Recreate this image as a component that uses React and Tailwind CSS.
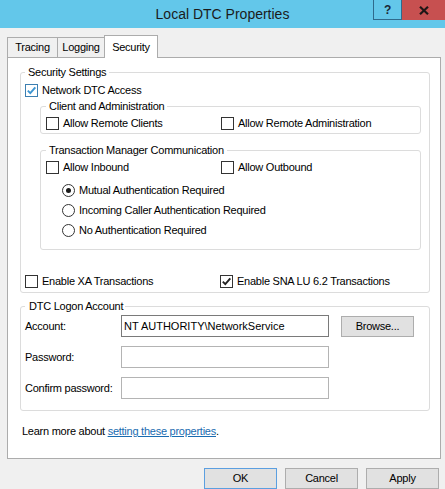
import React from 'react';

const Box = ({ checked, accent }) => (
    <span
        className={`flex w-[13px] h-[13px] shrink-0 items-center justify-center bg-white border ${accent ? 'border-[#3c7fb1]' : 'border-[#333333]'}`}
    >
        {checked && (
            <svg width="11" height="11" viewBox="0 0 11 11">
                <path d="M1.8 5.6 L4.3 8.1 L9.3 2.4" fill="none" stroke={accent ? '#3d95d1' : '#222222'} strokeWidth="1.9" />
            </svg>
        )}
    </span>
);

const Check = ({ label, checked, accent }) => (
    <div className="flex items-center gap-[4px] h-[13px] leading-[13px]">
        <Box checked={checked} accent={accent} />
        <span className="whitespace-nowrap">{label}</span>
    </div>
);

const Radio = ({ label, selected }) => (
    <div className="flex items-center gap-[4px] h-[20px]">
        <span className="flex w-[13px] h-[13px] items-center justify-center rounded-full border border-[#333333] bg-white">
            {selected && <span className="w-[5px] h-[5px] rounded-full bg-[#1a1a1a]"></span>}
        </span>
        <span className="whitespace-nowrap">{label}</span>
    </div>
);

const Input = ({ value, dark }) => (
    <div className={`w-[208px] h-[22px] bg-white border ${dark ? 'border-[#7a7a7a]' : 'border-[#b4b4b4]'} flex items-center pl-[2px] tracking-normal whitespace-nowrap`}>
        {value}
    </div>
);

const Button = ({ children, primary, className = '' }) => (
    <div className={`w-[73px] h-[21px] flex items-center justify-center bg-[#e1e1e1] border ${primary ? 'border-[#5b9fe0]' : 'border-[#adadad]'} ${className}`}>
        {children}
    </div>
);

export default function App() {
    return (
        <div className="w-[445px] h-[489px] bg-[#f0f0f0] overflow-hidden font-['Liberation_Sans',Arial,sans-serif] text-[11px] tracking-[-0.25px] text-black">
            {/* title bar */}
            <div className="relative h-[28px] bg-[#63c7ea] flex items-center justify-center">
                <span className="text-[14px] tracking-normal text-[#1b1b1b]">Local DTC Properties</span>
                <div className="absolute top-0 right-0 flex h-[20px]">
                    <div className="w-[29px] h-[20px] border border-t-0 border-[#2f6a8c] flex items-center justify-center font-bold text-[12px] text-[#1a2735]">?</div>
                    <div className="w-[43px] h-[20px] bg-[#c75050] flex items-center justify-center">
                        <svg width="10" height="9" viewBox="0 0 10 9">
                            <path d="M1 0.8 L9 8.2 M9 0.8 L1 8.2" stroke="#1f1616" strokeWidth="2.2" />
                        </svg>
                    </div>
                </div>
            </div>

            {/* tabs */}
            <div className="mt-[7px] pl-[7px] flex items-end h-[22px]">
                <div className="w-[51px] h-[20px] border border-b-0 border-[#acacac] flex items-center justify-center">Tracing</div>
                <div className="w-[47px] h-[20px] border border-l-0 border-b-0 border-[#acacac] flex items-center justify-center">Logging</div>
                <div className="relative z-10 -ml-px -mb-px w-[54px] h-[23px] border border-b-0 border-[#acacac] bg-white flex items-center justify-center">Security</div>
            </div>

            {/* panel */}
            <div className="ml-[7px] w-[434px] h-[402px] border border-[#acacac] bg-white">
                <fieldset className="ml-[12px] mt-[7px] w-[410px] border border-[#dcdcdc] rounded-[3px] pl-[4px] pb-[4px]">
                    <legend className="px-[3px] leading-[14px]">Security Settings</legend>
                    <div className="mt-[5px]">
                        <Check label="Network DTC Access" checked accent />
                    </div>

                    <fieldset className="ml-[15px] mt-[2px] w-[381px] border border-[#dcdcdc] rounded-[3px] pl-[5px] pb-[3px]">
                        <legend className="px-[3px] leading-[14px]">Client and Administration</legend>
                        <div className="mt-[4px] flex">
                            <div className="w-[175px]"><Check label="Allow Remote Clients" /></div>
                            <Check label="Allow Remote Administration" />
                        </div>
                    </fieldset>

                    <fieldset className="ml-[15px] mt-[9px] w-[381px] border border-[#dcdcdc] rounded-[3px] pl-[5px] pb-[9px]">
                        <legend className="px-[3px] leading-[14px]">Transaction Manager Communication</legend>
                        <div className="mt-[4px] flex">
                            <div className="w-[175px]"><Check label="Allow Inbound" /></div>
                            <Check label="Allow Outbound" />
                        </div>
                        <div className="mt-[6px] ml-[16px]">
                            <Radio label="Mutual Authentication Required" selected />
                            <Radio label="Incoming Caller Authentication Required" />
                            <Radio label="No Authentication Required" />
                        </div>
                    </fieldset>

                    <div className="mt-[25px] flex">
                        <div className="w-[195px]"><Check label="Enable XA Transactions" /></div>
                        <Check label="Enable SNA LU 6.2 Transactions" checked />
                    </div>
                </fieldset>

                <fieldset className="ml-[12px] mt-[6px] w-[410px] border border-[#dcdcdc] rounded-[3px] pl-[4px] pb-[11px]">
                    <legend className="pl-[4px] pr-[2px] leading-[14px]">DTC Logon Account</legend>
                    <div className="mt-[2px] flex items-start">
                        <div className="w-[96px] h-[22px] flex items-center">Account:</div>
                        <Input value="NT AUTHORITY\NetworkService" dark />
                        <Button className="ml-[12px] mt-px">Browse...</Button>
                    </div>
                    <div className="mt-[9px] flex">
                        <div className="w-[96px] h-[22px] flex items-center">Password:</div>
                        <Input />
                    </div>
                    <div className="mt-[9px] flex">
                        <div className="w-[96px] h-[22px] flex items-center">Confirm password:</div>
                        <Input />
                    </div>
                </fieldset>

                <p className="ml-[14px] mt-[13px] leading-[14px]">
                    Learn more about <span className="text-[#1a6bb0] underline">setting these properties</span>.
                </p>
            </div>

            {/* dialog buttons */}
            <div className="mt-[9px] pr-[6px] flex justify-end gap-[8px]">
                <Button primary>OK</Button>
                <Button>Cancel</Button>
                <Button>Apply</Button>
            </div>
        </div>
    );
}
